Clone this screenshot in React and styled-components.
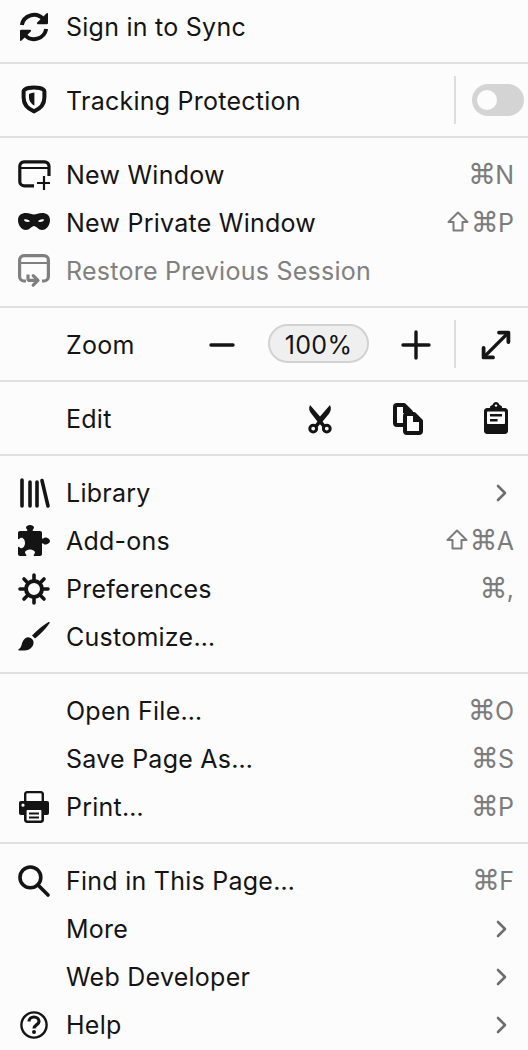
import React from "react";
import styled, { createGlobalStyle } from "styled-components";

const Global = createGlobalStyle`
  html, body { margin: 0; padding: 0; background: #fcfcfc; }
  body { font-family: Inter, "Liberation Sans", sans-serif; }
`;

const Menu = styled.div`
  width: 528px;
  height: 1050px;
  overflow: hidden;
  background: #fcfcfc;
  color: #141414;
`;

const Section = styled.section`
  padding: ${(p) => (p.$first ? "3px 0 11px" : "13px 0 11px")};
  border-bottom: ${(p) => (p.$last ? "none" : "2px solid #e0e0e0")};
`;

const Row = styled.div`
  height: 48px;
  display: flex;
  align-items: center;
  padding: 0 ${(p) => p.$right || 14}px 0 18px;
  color: ${(p) => (p.$disabled ? "#808080" : "#141414")};
`;

const IconSlot = styled.span`
  width: 32px;
  height: 32px;
  margin-right: 16px;
  flex: none;
  display: block;
`;

const Glyph = styled.svg`
  width: 32px;
  height: 32px;
  display: block;
  overflow: visible;
  fill: currentColor;
`;

const Label = styled.span`
  flex: 1;
  font-size: 25px;
  letter-spacing: 0.25px;
  white-space: nowrap;
`;

const Shortcut = styled.span`
  display: flex;
  align-items: center;
  font-size: 25px;
  color: #7c7c7c;
  white-space: nowrap;
`;

const KeySymbol = styled.span`
  font-family: "DejaVu Sans", sans-serif;
  font-size: 28px;
  line-height: 32px;
  margin-right: -1px;
`;

const ShiftKey = styled.svg`
  width: 22px;
  height: 21px;
  margin: -3px 2px 0 0;
  fill: none;
  stroke: #7c7c7c;
  stroke-width: 2;
  stroke-linejoin: round;
`;

const Chevron = styled.svg`
  width: 14px;
  height: 18px;
  margin-right: 5px;
  fill: none;
  stroke: #6e6e6e;
  stroke-width: 2.6;
  stroke-linecap: round;
  stroke-linejoin: round;
`;

const VLine = styled.span`
  width: 2px;
  height: 48px;
  flex: none;
  background: #dedede;
  margin: ${(p) => p.$margin || "0 0 2px"};
`;

const Toggle = styled.span`
  width: 52px;
  height: 32px;
  border-radius: 16px;
  background: #d4d4d4;
  margin: 0 0 2px 16px;
  display: flex;
  align-items: center;
  padding-left: 5px;
  box-sizing: border-box;
`;

const Knob = styled.span`
  width: 20px;
  height: 20px;
  border-radius: 50%;
  background: #fcfcfc;
`;

const ToolButton = styled.span`
  width: 48px;
  height: 48px;
  flex: none;
  display: flex;
  align-items: center;
  justify-content: center;
  margin-left: ${(p) => p.$gap || 0}px;
`;

const ZoomPill = styled.span`
  width: 101px;
  height: 39px;
  box-sizing: border-box;
  margin: 0 0 3px 22px;
  padding-top: 2px;
  border: 2px solid #d2d2d2;
  border-radius: 20px;
  background: #efefef;
  display: flex;
  align-items: center;
  justify-content: center;
  font-size: 25px;
  letter-spacing: 0.3px;
`;

const Icon = ({ children }) => <Glyph viewBox="0 0 16 16">{children}</Glyph>;
const line = { fill: "none", stroke: "currentColor", strokeWidth: 2, strokeLinecap: "round", strokeLinejoin: "round" };

const icons = {
  sync: (
    <Icon>
      <path {...line} strokeLinecap="butt" d="M1.9 7A6.2 6.2 0 0 1 12.6 4" />
      <path {...line} strokeLinecap="butt" d="M14.1 9A6.2 6.2 0 0 1 3.4 12" />
      <path d="M14.6 1c.2 0 .4.2.4.4v4.6c0 .4-.3.6-.6.6H9.9c-.4 0-.6-.5-.3-.8l4.6-4.6c.1-.1.3-.2.4-.2zM1.4 15c-.2 0-.4-.2-.4-.4V10c0-.4.3-.6.6-.6h4.5c.4 0 .6.5.3.8l-4.6 4.6c-.1.1-.3.2-.4.2z" />
    </Icon>
  ),
  shield: (
    <Icon>
      <path {...line} strokeWidth="2" d="M8 1.300c2 0 3.800.4 4.700 1 .3.2.5.4.5.8v3.200C13.200 9.700 11 12 8 13.200 5 12 2.800 9.700 2.800 6.300V3.100c0-.4.2-.6.5-.8.9-.6 2.700-1 4.700-1z" />
      <path d="M8.200 3.800v6.500C6.700 9.500 5.500 8 5.500 6.200V4.500c.8-.4 1.700-.6 2.700-.7z" />
    </Icon>
  ),
  newWindow: (
    <Icon>
      <path {...line} strokeWidth="1.600" strokeLinecap="butt" d="M8 13.400H3A2.200 2.200 0 0 1 .9 11.200V3.600A2.200 2.200 0 0 1 3 1.400H13.300A2.200 2.200 0 0 1 15.500 3.600V8.500" />
      <path {...line} strokeWidth="1" strokeLinecap="butt" d="M1 4.500H15.500" />
      <path {...line} strokeWidth="1.100" strokeLinecap="butt" d="M9.500 12H16M13 8.500V15.500" />
    </Icon>
  ),
  mask: (
    <Icon>
      <path fillRule="evenodd" d="M4 3c1.700 0 3 .8 4 .8S10.300 3 12 3c2.300 0 4 1.200 4 3.500 0 2.700-1.800 5-4 5-1.800 0-2.800-2-4-2s-2.200 2-4 2c-2.200 0-4-2.300-4-5C0 4.200 1.700 3 4 3zM2.900 6.400c.5 1 1.800 1.400 3.100.9-.5-1-2-1.500-3.100-.9zm10.200 0c-1.100-.6-2.600-.1-3.100.9 1.300.5 2.600.1 3.100-.9z" />
    </Icon>
  ),
  restore: (
    <Icon>
      <path {...line} strokeWidth="1.600" strokeLinecap="butt" d="M4 13H3A2.200 2.200 0 0 1 .8 10.800V2.500A2.200 2.200 0 0 1 3 .3H13A2.200 2.200 0 0 1 15.200 2.500V10.800A2.200 2.200 0 0 1 13 13H12" />
      <path {...line} strokeWidth="1" strokeLinecap="butt" d="M1 4H15" />
      <path {...line} strokeWidth="1.600" strokeLinecap="butt" d="M5 9.800V11.700A1 1 0 0 0 6 12.700H9.500" />
      <path {...line} strokeWidth="1.600" d="M7.600 10.300L10 12.700 7.600 15.100" />
    </Icon>
  ),
  library: (
    <Icon>
      <path {...line} strokeWidth="1.800" d="M2 1.500v13M6 2.500v12M9.500 2.500v12M12 1.800l3 12.700" />
    </Icon>
  ),
  addons: (
    <Icon>
      <path d="M1 3H4.300c.4 0 .5-.4.3-.6C4.200 2 4 1.700 4 1.300 4 .5 5 0 6 0s2 .5 2 1.300c0 .4-.2.7-.6 1.100-.2.2-.1.600.3.600H11c.6 0 1 .4 1 1V6.500c0 .4.4.5.6.3.4-.4.7-.6 1.100-.6C14.500 6.200 16 7 16 8s-1.500 1.800-2.300 1.800c-.4 0-.7-.2-1.100-.6-.2-.2-.6-.1-.6.300V14.500c0 .6-.4 1-1 1H8.200c-.4 0-.5-.4-.3-.6.4-.4.6-.7.6-1.100C8.500 13 7.300 12.300 6 12.300s-2.500.7-2.500 1.500c0 .4.2.7.6 1.100.2.2.1.6-.3.6H1c-.6 0-1-.4-1-1V11.300c0-.4.4-.5.6-.3.4.4.7.6 1.100.6C2.700 11.600 3.500 10.400 3.500 9S2.700 6.400 1.700 6.400c-.4 0-.7.2-1.100.6-.2.2-.6.1-.6-.3V4c0-.6.4-1 1-1z" />
    </Icon>
  ),
  gear: (
    <Icon>
      <circle {...line} cx="8" cy="8" r="4" strokeWidth="2" />
      <path {...line} strokeWidth="1.800" d="M8 1v2.200M8 12.800V15M1 8h2.200M12.800 8H15M3 3l1.600 1.600M11.400 11.400 13 13M13 3l-1.600 1.600M4.600 11.400 3 13" />
    </Icon>
  ),
  brush: (
    <Icon>
      <path d="M15.300.5c.4-.2.7.2.5.5C14.300 3.200 11.500 6.500 8.500 8.800L7 7.200C9.500 4.700 12.500 2.100 15.300.5zM5.500 8.200c1.300.2 2.300 1.200 2.300 2.500 0 2.300-2.300 4-4.500 4H.5c-.4 0-.5-.4-.2-.6 1.600-.9 1.400-2.300 2-3.700.6-1.300 1.900-2.400 3.200-2.200z" />
    </Icon>
  ),
  print: (
    <Icon>
      <path fillRule="evenodd" d="M4.500 0h7c.8 0 1.500.7 1.500 1.500V5h1.500c.6 0 1 .4 1 1v5c0 .6-.4 1-1 1H13v2.500c0 .8-.7 1.500-1.500 1.500h-7c-.8 0-1.500-.7-1.500-1.500V12H1.500c-.6 0-1-.4-1-1V6c0-.6.4-1 1-1H3V1.500C3 .7 3.700 0 4.500 0zm.3 1.100c-.4 0-.6.200-.6.6V5h7.600V1.700c0-.4-.2-.6-.6-.6zM4.800 9.500c-.3 0-.5.200-.5.500v4.300c0 .3.200.5.500.5h6.400c.3 0 .5-.2.500-.5V10c0-.3-.2-.5-.5-.5zM2.500 6.300a.8.8 0 1 0 0 1.600.8.800 0 0 0 0-1.600z" />
      <path d="M5.500 10.800h5v1h-5zM5.500 12.800h5v1h-5z" />
    </Icon>
  ),
  search: (
    <Icon>
      <circle {...line} cx="6.200" cy="6.200" r="5.200" strokeWidth="1.800" />
      <path {...line} strokeWidth="1.800" d="M10 10l5 5" />
    </Icon>
  ),
  help: (
    <Icon>
      <circle {...line} cx="8" cy="8" r="6.300" strokeWidth="1.200" />
      <path {...line} strokeWidth="1.600" strokeLinecap="butt" d="M5.500 6.300C5.500 4.800 6.700 4 8 4s2.500.8 2.500 2.200c0 1.700-2.500 1.800-2.500 3.500" />
      <circle cx="8" cy="11.500" r="1" />
    </Icon>
  ),
  minus: (
    <Icon>
      <path {...line} strokeWidth="1.700" d="M2.500 8h11" />
    </Icon>
  ),
  plus: (
    <Icon>
      <path {...line} strokeWidth="1.700" d="M1.500 8h13M8 1.500v13" />
    </Icon>
  ),
  expand: (
    <Icon>
      <path {...line} strokeWidth="1.600" strokeLinecap="butt" d="M2.500 13.500l11-11" />
      <path {...line} strokeWidth="1.900" d="M9.500 1.800h4.700v4.700M1.800 9.500v4.700h4.700" />
    </Icon>
  ),
  cut: (
    <Icon>
      <path d="M3 1 8 6.800 13 1c.8 1.600.4 3.200-.5 4.400L9.300 9.300l1.700 2.200-1.400 1L8 10.600l-1.600 1.900-1.400-1 1.700-2.200-3-3.900C2.600 4.200 2.200 2.600 3 1z" />
      <circle {...line} cx="4.600" cy="12.800" r="1.700" strokeWidth="1.500" />
      <circle {...line} cx="11.400" cy="12.800" r="1.700" strokeWidth="1.500" />
    </Icon>
  ),
  copy: (
    <Icon>
      <path {...line} strokeWidth="2" fill="#fcfcfc" d="M2.500 1h3.500L9.500 4.500V10c0 .6-.4 1-1 1h-6c-.6 0-1-.4-1-1V2c0-.6.4-1 1-1z" />
      <path {...line} strokeWidth="2" fill="#fcfcfc" d="M7.500 5.500h3.500L14.500 9v5c0 .6-.4 1-1 1h-6c-.6 0-1-.4-1-1V6.500c0-.6.4-1 1-1z" />
      <path d="M5.500 1.500v3.500H9zM10.500 6v3.500h3.500z" />
    </Icon>
  ),
  paste: (
    <Glyph viewBox="0 0.5 16 16">
      <path fillRule="evenodd" d="M8 0c.8 0 1.400.5 1.600 1.200L11 2.200V3h1.500C13.300 3 14 3.700 14 4.500v10c0 .8-.7 1.500-1.500 1.500h-9C2.700 16 2 15.300 2 14.500v-10C2 3.700 2.700 3 3.500 3H5v-.8l1.400-1C6.600.5 7.200 0 8 0zM4 4.800c-.3 0-.5.200-.5.500V10.500c0 .3.200.5.500.5h8c.3 0 .5-.2.500-.5V5.300c0-.3-.2-.5-.5-.5z" />
      <path d="M5 6h6v1.300H5zM5 8.500h3.800v1.300H5z" />
      <circle cx="8" cy="1.800" r=".6" fill="#fcfcfc" />
    </Glyph>
  ),
};

const Keys = ({ shift, text }) => (
  <Shortcut>
    {shift && (
      <ShiftKey viewBox="0 0 22 21">
        <path d="M11 1.500 20.500 11H15.500V19.500H6.500V11H1.500z" />
      </ShiftKey>
    )}
    <KeySymbol>⌘</KeySymbol>
    {text}
  </Shortcut>
);

const Arrow = () => (
  <Chevron viewBox="0 0 14 18">
    <path d="M3 2l7 7-7 7" />
  </Chevron>
);

const Item = ({ icon, label, disabled, children }) => (
  <Row $disabled={disabled}>
    <IconSlot>{icon && icons[icon]}</IconSlot>
    <Label>{label}</Label>
    {children}
  </Row>
);

export default function App() {
  return (
    <Menu>
      <Global />
      <Section $first>
        <Item icon="sync" label="Sign in to Sync" />
      </Section>
      <Section>
        <Row $right={4}>
          <IconSlot>{icons.shield}</IconSlot>
          <Label>Tracking Protection</Label>
          <VLine />
          <Toggle>
            <Knob />
          </Toggle>
        </Row>
      </Section>
      <Section>
        <Item icon="newWindow" label="New Window">
          <Keys text="N" />
        </Item>
        <Item icon="mask" label="New Private Window">
          <Keys shift text="P" />
        </Item>
        <Item icon="restore" label="Restore Previous Session" disabled />
      </Section>
      <Section>
        <Row $right={8}>
          <IconSlot />
          <Label>Zoom</Label>
          <ToolButton>{icons.minus}</ToolButton>
          <ZoomPill>100%</ZoomPill>
          <ToolButton $gap={23}>{icons.plus}</ToolButton>
          <VLine $margin="0 16px 2px 14px" />
          <ToolButton>{icons.expand}</ToolButton>
        </Row>
      </Section>
      <Section>
        <Row $right={8}>
          <IconSlot />
          <Label>Edit</Label>
          <ToolButton>{icons.cut}</ToolButton>
          <ToolButton $gap={40}>{icons.copy}</ToolButton>
          <ToolButton $gap={40}>{icons.paste}</ToolButton>
        </Row>
      </Section>
      <Section>
        <Item icon="library" label="Library">
          <Arrow />
        </Item>
        <Item icon="addons" label="Add-ons">
          <Keys shift text="A" />
        </Item>
        <Item icon="gear" label="Preferences">
          <Keys text="," />
        </Item>
        <Item icon="brush" label="Customize…" />
      </Section>
      <Section>
        <Item label="Open File…">
          <Keys text="O" />
        </Item>
        <Item label="Save Page As…">
          <Keys text="S" />
        </Item>
        <Item icon="print" label="Print…">
          <Keys text="P" />
        </Item>
      </Section>
      <Section $last>
        <Item icon="search" label="Find in This Page…">
          <Keys text="F" />
        </Item>
        <Item label="More">
          <Arrow />
        </Item>
        <Item label="Web Developer">
          <Arrow />
        </Item>
        <Item icon="help" label="Help">
          <Arrow />
        </Item>
      </Section>
    </Menu>
  );
}
